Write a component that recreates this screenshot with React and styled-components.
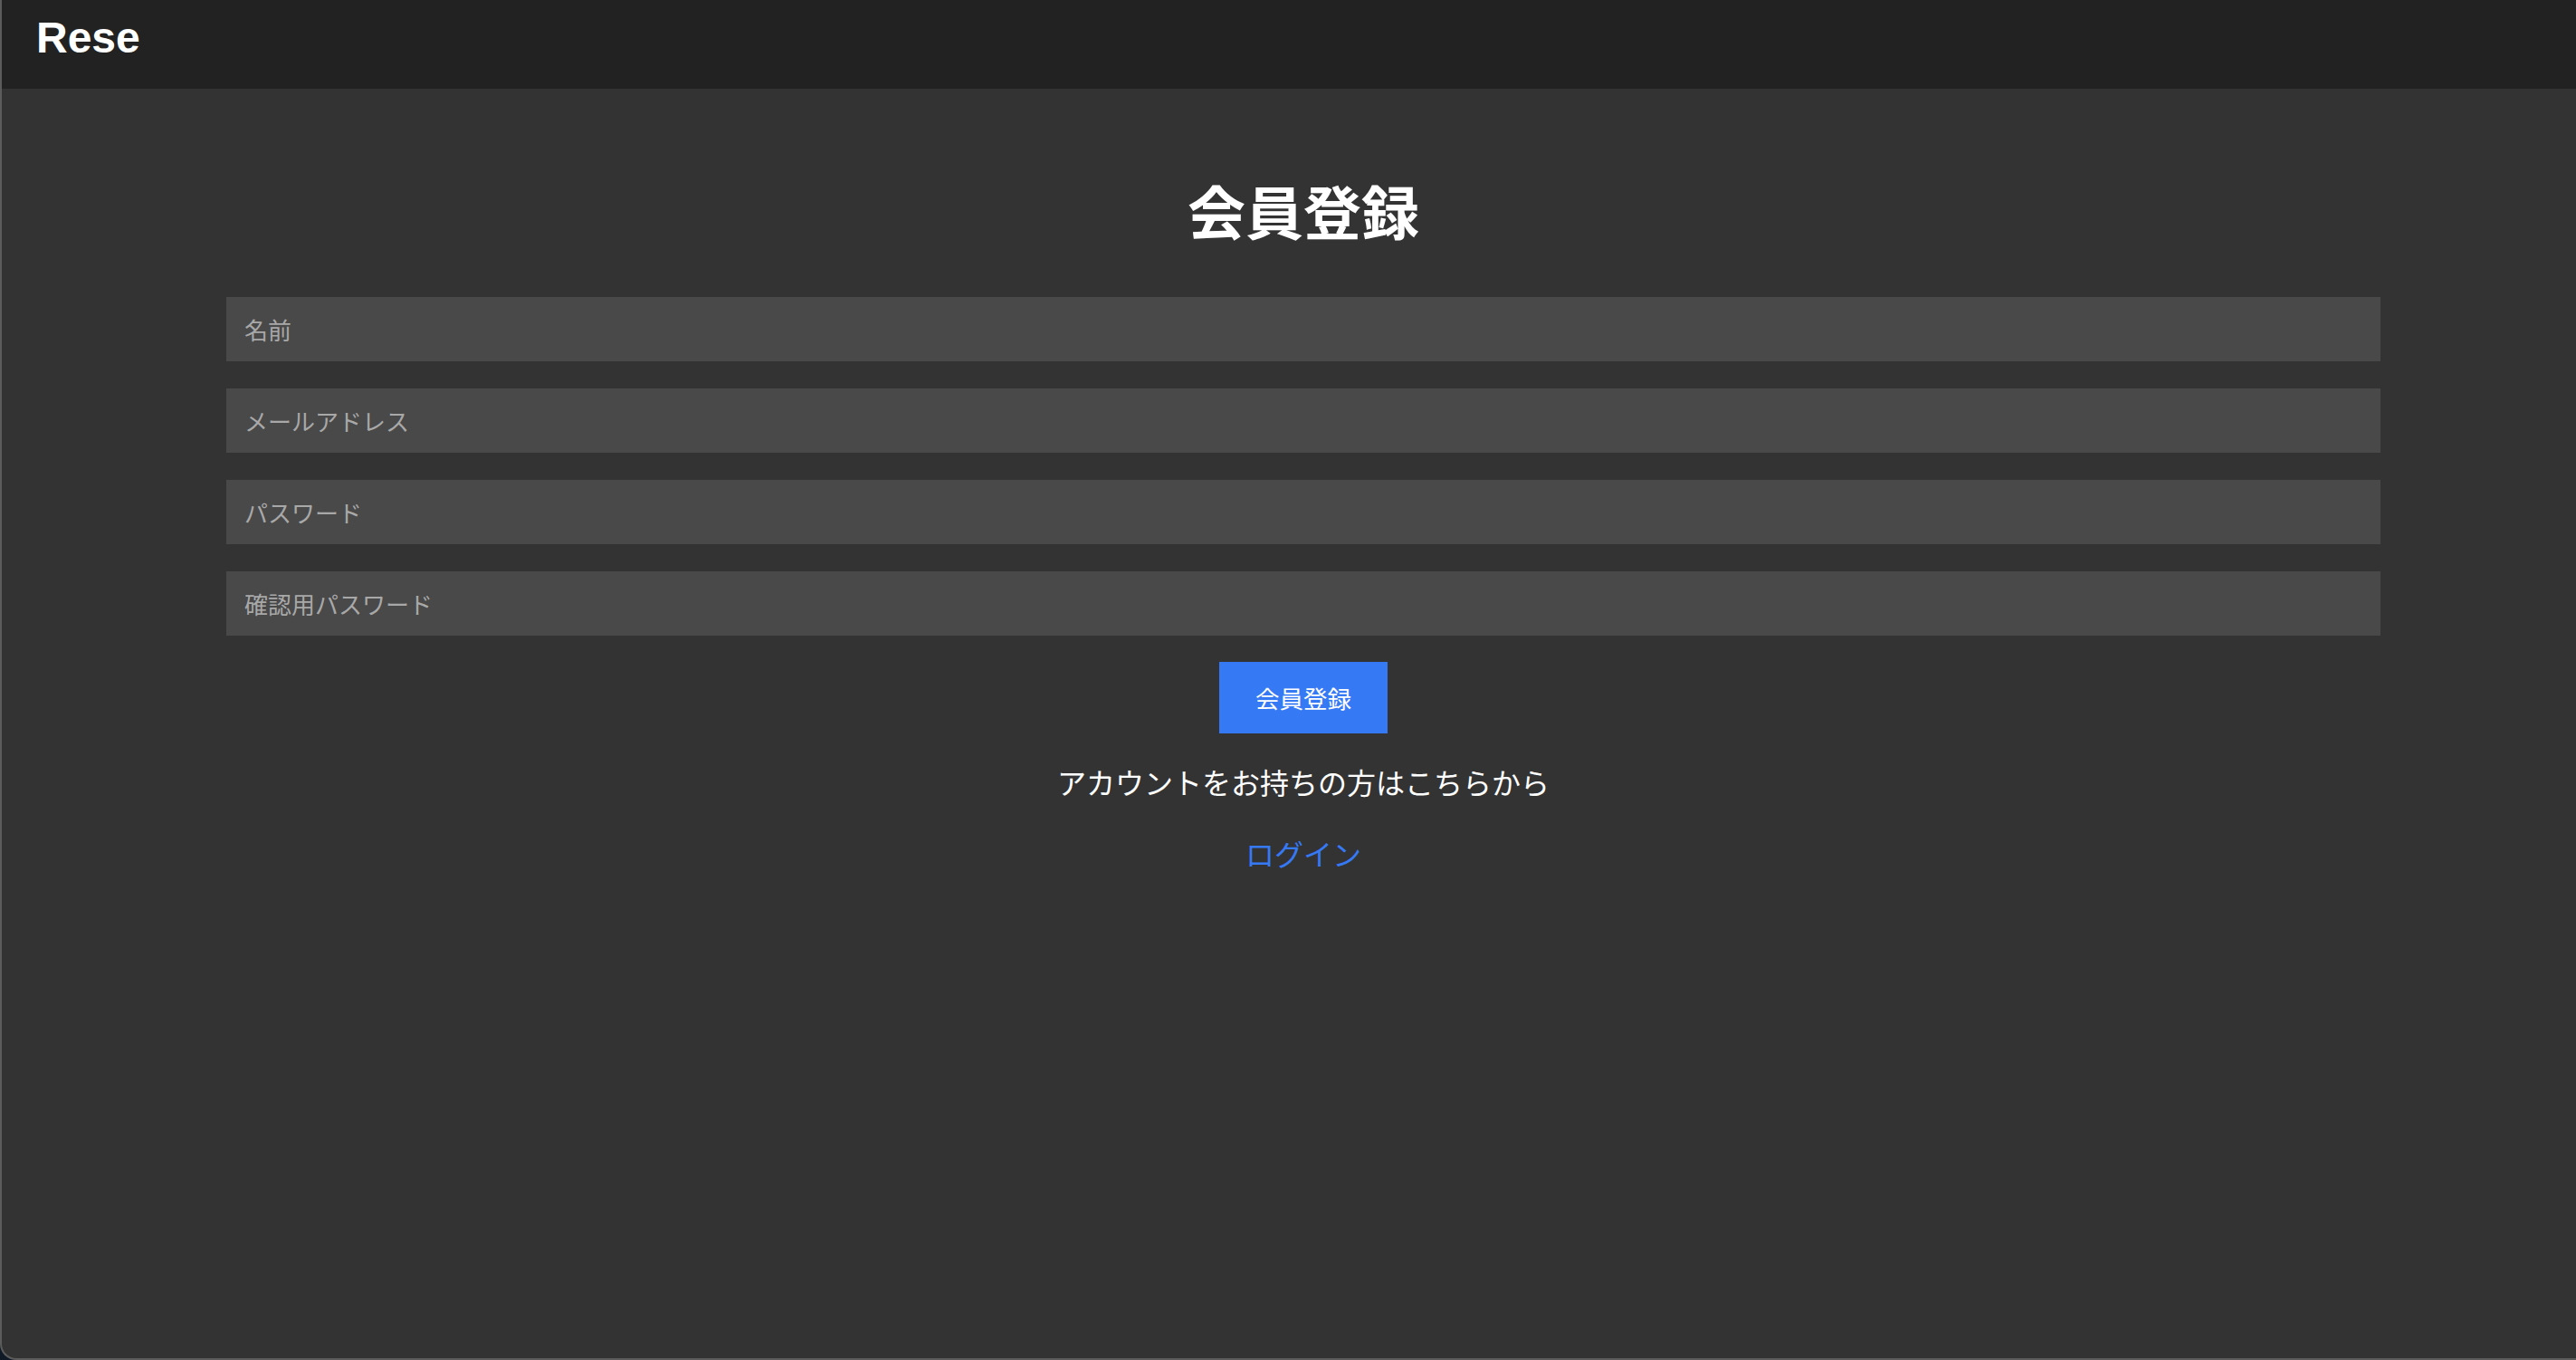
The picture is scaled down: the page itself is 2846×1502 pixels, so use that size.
import styled, { createGlobalStyle } from 'styled-components';

const GlobalStyle = createGlobalStyle`
  * { box-sizing: border-box; }
  html, body {
    margin: 0;
    padding: 0;
    background: #0f1a26;
  }
`

const Frame = styled.div`
  width: 100vw;
  height: 100vh;
  display: flex;
  flex-direction: column;
  background: #333333;
  border-left: 2px solid #5c5c5c;
  border-bottom: 2px solid #5c5c5c;
  border-bottom-left-radius: 18px;
  overflow: hidden;
  font-family: "Noto Sans CJK JP", "Noto Sans", sans-serif;
`

const Header = styled.header`
  height: 98px;
  flex-shrink: 0;
  display: flex;
  align-items: center;
  padding-left: 38px;
  background: #222222;
`

const Logo = styled.h2`
  margin: 0;
  font-family: "Liberation Sans", Arial, sans-serif;
  font-weight: 700;
  font-size: 48px;
  line-height: 1;
  color: #ffffff;
  padding-bottom: 14px;
`

const Main = styled.main`
  flex: 1;
  padding: 94px 216px 0 248px;
`

const Form = styled.form`
  display: flex;
  flex-direction: column;
  align-items: center;
`

const Title = styled.h1`
  margin: 0 0 58px;
  font-size: 64px;
  font-weight: 700;
  line-height: 78px;
  color: #ffffff;
`

const Input = styled.input`
  width: 100%;
  height: 71px;
  margin-bottom: 30px;
  padding: 0 20px;
  border: none;
  outline: none;
  background: #494949;
  color: #ffffff;
  font-family: inherit;
  font-size: 26px;

  &::placeholder {
    color: #a8a8a8;
  }

  &:last-of-type {
    margin-bottom: 29px;
  }
`

const Button = styled.button`
  width: 186px;
  height: 79px;
  border: none;
  background: #3679f5;
  color: #ffffff;
  font-family: inherit;
  font-size: 26.5px;
  cursor: pointer;
`

const Note = styled.p`
  margin: 29px 0 0;
  font-size: 32px;
  line-height: 48px;
  color: #ffffff;
`

const LoginLink = styled.a`
  margin-top: 31px;
  font-size: 32px;
  line-height: 48px;
  color: #3679f5;
  text-decoration: none;
`

const App = () => {
  return (
    <>
      <GlobalStyle />
      <Frame>
        <Header>
          <Logo>Rese</Logo>
        </Header>
        <Main>
          <Form onSubmit={(e) => e.preventDefault()}>
            <Title>会員登録</Title>
            <Input type="text" placeholder="名前" />
            <Input type="email" placeholder="メールアドレス" />
            <Input type="password" placeholder="パスワード" />
            <Input type="password" placeholder="確認用パスワード" />
            <Button type="submit">会員登録</Button>
            <Note>アカウントをお持ちの方はこちらから</Note>
            <LoginLink href="#">ログイン</LoginLink>
          </Form>
        </Main>
      </Frame>
    </>
  )
}

export default App
